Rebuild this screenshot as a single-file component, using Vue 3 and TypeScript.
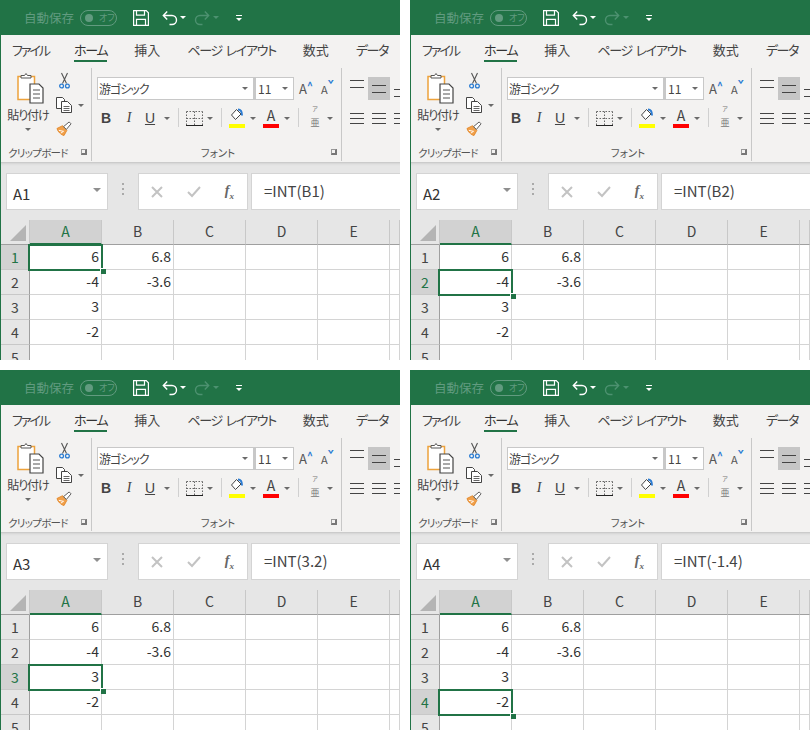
<script setup lang="ts">
interface Panel { name: string; formula: string; row: number }
const panels: Panel[] = [
  { name: 'A1', formula: '=INT(B1)', row: 1 },
  { name: 'A2', formula: '=INT(B2)', row: 2 },
  { name: 'A3', formula: '=INT(3.2)', row: 3 },
  { name: 'A4', formula: '=INT(-1.4)', row: 4 },
]
const cols = ['A', 'B', 'C', 'D', 'E', '']
const rows: string[][] = [
  ['6', '6.8'],
  ['-4', '-3.6'],
  ['3', ''],
  ['-2', ''],
  ['', ''],
]
const tabs = [
  { t: 'ファイル', c: 'tight' },
  { t: 'ホーム', c: 'kana on' },
  { t: '挿入', c: '' },
  { t: 'ページ レイアウト', c: 'kana' },
  { t: '数式', c: '' },
  { t: 'データ', c: 'kana' },
]
</script>

<template>
  <main class="sheet">
    <section v-for="p in panels" :key="p.name" class="panel">
      <header class="title">
        <span class="autosave">自動保存</span>
        <span class="toggle"><i class="knob"></i><b>オフ</b></span>
        <svg class="save" width="16" height="16" viewBox="0 0 16 16" fill="none" stroke="#fff" stroke-width="1.2">
          <path d="M.6.6h12.6l2.2 2.2v12.6H.6z" /><path d="M3.5.8v4.4h8V.8M3.5 15.2V9.4h9v5.8" />
        </svg>
        <svg class="undo" width="16" height="16" viewBox="0 0 16 16" fill="none" stroke="#fff" stroke-width="1.4">
          <path d="M1.5 5.5h8.5a4 4 0 0 1 0 9H7.5M5.2 1.5 1.3 5.5l3.9 4" />
        </svg>
        <i class="caret white"></i>
        <svg class="redo" width="16" height="16" viewBox="0 0 16 16" fill="none" stroke="#4d9170" stroke-width="1.4">
          <path d="M14.5 5.5H6a4 4 0 0 0 0 9h2.5M10.8 1.5l3.9 4-3.9 4" />
        </svg>
        <i class="caret dim"></i>
        <span class="custom"><i></i><i class="caret white"></i></span>
      </header>

      <nav class="tabs">
        <span v-for="t in tabs" :key="t.t" class="tab" :class="t.c">{{ t.t }}</span>
      </nav>

      <div class="ribbon">
        <div class="group clip">
          <div class="group-body clip-body">
            <div class="paste">
              <svg class="paste-icon" width="30" height="32" viewBox="0 0 30 32" fill="none">
                <path d="M2 4.5h16.5v23H2z" stroke="#eda23c" stroke-width="1.5" fill="#fff" />
                <path d="M5 6V3.5h3.5L10 1.5l1.5 2H15V6z" fill="#fff" stroke="#555" />
                <path d="M14 12h9l4 4v15H14z" fill="#fff" stroke="#444" stroke-width="1.2" />
                <path d="M17 18h7M17 22h7M17 26h7" stroke="#555" />
              </svg>
              <span class="paste-label">貼り付け</span>
              <i class="caret gray"></i>
            </div>
            <div class="clip-tools">
              <svg class="scissors" width="11" height="17" viewBox="0 0 11 17" fill="none">
                <path d="M2.5 1l5 10.5M8.5 1l-5 10.5" stroke="#555" stroke-width="1.1" />
                <circle cx="2.6" cy="14" r="1.9" stroke="#2b7cd3" stroke-width="1.3" /><circle cx="8.4" cy="14" r="1.9" stroke="#2b7cd3" stroke-width="1.3" />
              </svg>
              <span class="copy">
                <svg width="16" height="16" viewBox="0 0 16 16" fill="none" stroke="#444">
                  <path d="M.5.5h6l2 2v9h-8z" fill="#fff" /><path d="M5.5 4.5h6l4 4v7h-10z" fill="#fff" /><path d="M7.5 9.5h6M7.5 11.5h6M7.5 13.5h6" stroke="#666" />
                </svg>
                <i class="caret gray"></i>
              </span>
              <svg width="16" height="15" viewBox="0 0 17 16" fill="none">
                <path d="M1 8l6-3 4.5 5-3 5.5C6 15 2 12 1 8z" fill="#f0a04b" stroke="#e48a2c" />
                <path d="M8 6l6-5 2 2-5 6z" fill="#fff" stroke="#555" />
                <path d="M3 10l5 1M5 13l3-2" stroke="#fff" />
              </svg>
            </div>
          </div>
          <div class="label"><span class="clip-name">クリップボード</span><i class="launcher"></i></div>
        </div>

        <div class="group font">
          <div class="group-body font-body">
            <div class="font-row">
              <span class="select fname"><span class="fname-text">游ゴシック</span><i class="caret gray"></i></span>
              <span class="select fsize">11<i class="caret gray"></i></span>
              <span class="grow big">A<sup>^</sup></span>
              <span class="grow small">A<sup>ˇ</sup></span>
            </div>
            <div class="font-row second">
              <b class="fmt bold">B</b>
              <i class="fmt ital">I</i>
              <u class="fmt und">U</u>
              <i class="caret gray c1"></i>
              <i class="vsep s1"></i>
              <svg class="borders" width="17" height="15" viewBox="0 0 17 15" fill="none" stroke="#666" stroke-dasharray="1.5 1.5">
                <path d="M.5.5h16M.5 7.5h16M.5.5v14M8.5.5v14M16.5.5v14" /><path d="M0 14.5h17" stroke="#222" stroke-dasharray="none" />
              </svg>
              <i class="caret gray c2"></i>
              <i class="vsep s2"></i>
              <span class="color fill">
                <svg width="14" height="13" viewBox="0 0 14 13" fill="none">
                  <path d="M6.5 1.5 1.5 7l4 4.5L11 6z" stroke="#444" fill="#fff" /><path d="M8 1.5c3 0 4 2 4 6" stroke="#2b7cd3" stroke-width="2" />
                </svg>
                <em class="yellow"></em>
              </span>
              <i class="caret gray c3"></i>
              <span class="color fcolor"><span>A</span><em class="red"></em></span>
              <i class="caret gray c4"></i>
              <i class="vsep s3"></i>
              <span class="phon"><small>ア</small><span>亜</span></span>
              <i class="caret gray c5"></i>
            </div>
          </div>
          <div class="label center"><span>フォント</span><i class="launcher"></i></div>
        </div>

        <div class="group align">
          <div class="align-row">
            <span class="lines top"><i></i><i></i></span>
            <span class="lines mid active"><i></i><i></i></span>
            <span class="lines bot"><i></i><i></i></span>
          </div>
          <div class="align-row low">
            <span class="lines full l"><i></i><i></i><i></i></span>
            <span class="lines full c"><i></i><i></i><i></i></span>
            <span class="lines full r"><i></i><i></i><i></i></span>
          </div>
        </div>
      </div>

      <div class="fbar">
        <div class="namebox"><span>{{ p.name }}</span><i class="caret name-caret"></i></div>
        <div class="dots"><i></i><i></i><i></i></div>
        <div class="fbtns">
          <svg width="12" height="12" viewBox="0 0 12 12" stroke="#c3c3c3" stroke-width="2"><path d="M1 1l10 10M11 1 1 11" /></svg>
          <svg width="14" height="12" viewBox="0 0 14 12" fill="none" stroke="#c3c3c3" stroke-width="2"><path d="M1 6l4 4 8-9" /></svg>
          <span class="fx">f<sub>x</sub></span>
        </div>
        <div class="finput">{{ p.formula }}</div>
      </div>

      <div class="grid">
        <div class="corner"><i></i></div>
        <div v-for="(c, i) in cols" :key="'h' + i" class="chead" :class="{ on: c === 'A' }">{{ c }}</div>
        <template v-for="(r, ri) in rows" :key="ri">
          <div class="rhead" :class="{ on: ri + 1 === p.row }">{{ ri + 1 }}</div>
          <div v-for="(c, ci) in cols" :key="ci" class="cell">
            {{ r[ci] }}
            <span v-if="ci === 0 && ri + 1 === p.row" class="active-cell"><i></i></span>
          </div>
        </template>
      </div>
    </section>
  </main>
</template>

<style scoped>
.sheet {
  display: grid;
  grid-template-columns: 400px 400px;
  grid-template-rows: 360px 360px;
  gap: 10px;
  width: 810px;
  height: 730px;
  font-family: "Noto Sans CJK JP", sans-serif;
  font-feature-settings: "palt";
  color: #333;
}
.panel {
  box-sizing: border-box;
  height: 360px;
  overflow: hidden;
  border-left: 1px solid #217346;
  background: #f3f2f1;
  display: flex;
  flex-direction: column;
}
i { display: block; font-style: normal; }
.caret { width: 0; height: 0; border: 3px solid transparent; border-top: 3px solid #666; border-bottom: 0; flex: none; }
.caret.white { border-top-color: #fff; }
.caret.dim { border-top-color: #4d9170; }
.caret.gray { border-top-color: #6a6a6a; }

.title { height: 35px; flex: none; background: #217346; display: flex; align-items: center; }
.autosave { margin-left: 23px; width: 48px; margin-right: 1px; font-size: 12.5px; color: #629b80; white-space: nowrap; font-feature-settings: normal; }
.toggle { margin-left: 7px; box-sizing: border-box; width: 37px; height: 16px; border: 1px solid #629b80; border-radius: 8px; display: flex; align-items: center; color: #629b80; font-size: 9px; }
.knob { width: 8px; height: 8px; border-radius: 50%; background: #629b80; margin-left: 4px; }
.toggle b { font-weight: 400; margin-left: 6px; line-height: 14px; }
.save { margin-left: 16px; }
.undo { margin-left: 13px; }
.title .caret.white { margin-left: 2px; }
.redo { margin-left: 8px; }
.title .caret.dim { margin-left: 3px; }
.custom { margin-left: 17px; display: flex; flex-direction: column; align-items: center; gap: 2px; }
.custom i:first-child { width: 6px; height: 1px; background: #fff; }
.custom .caret.white { margin-left: 0; }

.tabs { height: 30px; flex: none; display: flex; font-size: 13px; position: relative; color: #444; }
.tab { line-height: 30px; white-space: nowrap; margin-left: 27px; height: 27px; }
.tab:first-child { margin-left: 11px; }
.tab.kana { letter-spacing: -1.3px; word-spacing: 2px; }
.tab.tight { letter-spacing: -2px; }
.tab.on { margin-left: 25px; border-bottom: 2px solid #217346; color: #333; height: 25px; line-height: 30px; }

.ribbon { height: 97px; flex: none; display: flex; overflow: hidden; }
.group { display: flex; flex-direction: column; height: 93px; margin-top: 3px; flex: none; border-right: 1px solid #c8c8c8; box-sizing: border-box; }
.group-body { flex: 1; display: flex; min-height: 0; }
.clip { width: 91px; }
.font { width: 250px; }
.label { height: 16px; margin-bottom: 1px; display: flex; align-items: center; justify-content: space-between; font-size: 10.5px; color: #555; padding: 0 4px 0 7px; white-space: nowrap; position: relative; flex: none; }
.clip-name { letter-spacing: -0.7px; }
.label.center { justify-content: center; }
.label.center .launcher { position: absolute; right: 4px; }
.launcher { width: 6px; height: 6px; border-left: 1px solid #999; border-top: 1px solid #999; border-right: 2px solid #777; border-bottom: 2px solid #777; box-sizing: border-box; }

.clip-body { position: relative; }
.paste { width: 54px; display: flex; flex-direction: column; align-items: center; padding-top: 4px; }
.paste-icon { margin-left: 5px; }
.paste-label { font-size: 12px; letter-spacing: -1px; line-height: 22px; white-space: nowrap; color: #444; }
.paste .caret { margin-top: 2px; }
.clip-tools { display: flex; flex-direction: column; align-items: flex-start; gap: 8px; padding-top: 4px; margin-left: 1px; }
.scissors { margin-left: 3px; }
.copy { display: flex; align-items: center; gap: 6px; }

.font-body { flex-direction: column; padding: 9px 0 0 5px; }
.font-row { display: flex; align-items: center; height: 23px; }
.select { box-sizing: border-box; height: 23px; background: #fff; border: 1px solid #c8c8c8; display: flex; align-items: center; justify-content: space-between; font-size: 12px; padding: 0 5px 0 1px; color: #444; }
.fname-text { letter-spacing: -1px; }
.fname { width: 157px; }
.fsize { width: 40px; border-left-width: 2px; padding-left: 2px; }
.grow { font-size: 13px; color: #555; display: flex; line-height: 20px; }
.grow sup { color: #2b7cd3; font-size: 10px; line-height: 12px; font-weight: 700; }
.big { margin-left: 5px; width: 22px; }
.small { font-size: 11px; }

.second { margin-top: 8px; height: 20px; position: relative; }
.fmt { position: absolute; font-size: 14px; line-height: 20px; color: #444; font-family: "Liberation Sans", sans-serif; text-align: center; width: 14px; }
.bold { left: 2px; }
.ital { left: 25px; font-family: "Liberation Serif", serif; font-style: italic; }
.und { left: 46px; }
.second > .caret, .second > .vsep, .second > svg, .second > .color, .second > .phon { position: absolute; }
.c1 { left: 67px; top: 9px; }
.vsep { width: 1px; height: 19px; background: #d0d0d0; top: 0; }
.s1 { left: 81px; }
.borders { left: 89px; top: 3px; }
.c2 { left: 110px; top: 9px; }
.s2 { left: 124px; }
.color { width: 16px; height: 20px; display: flex; flex-direction: column; align-items: center; font-size: 14px; line-height: 15px; color: #444; top: 0; }
.color em { display: block; width: 16px; height: 4px; flex: none; margin-top: auto; }
.yellow { background: #ffff00; }
.red { background: #ff0000; }
.fill { left: 132px; }
.c3 { left: 153px; top: 9px; }
.fcolor { left: 166px; }
.c4 { left: 187px; top: 9px; }
.s3 { left: 201px; }
.phon { left: 212px; top: -4px; width: 12px; display: flex; flex-direction: column; align-items: center; gap: 3px; font-size: 9px; line-height: 13px; color: #777; }
.phon small { font-size: 6px; line-height: 9px; }
.c5 { left: 230px; top: 9px; }

.align { border: 0; width: 58px; padding: 9px 0 0 8px; }
.align-row { display: flex; height: 23px; }
.low { margin-top: 8px; height: 20px; }
.lines { box-sizing: border-box; width: 22px; padding: 0 4px; display: flex; flex-direction: column; gap: 6px; justify-content: center; }
.lines i { height: 1px; background: #444; width: 14px; }
.active { background: #c6c6c6; }
.top { justify-content: flex-start; padding-top: 3px; width: 18px; padding-left: 0; }
.bot { justify-content: flex-end; padding-bottom: 3px; }
.full { gap: 4px; }
.full.l { padding-left: 0; }

.fbar { height: 58px; flex: none; background: #e6e6e6; display: flex; align-items: flex-start; padding-top: 11px; box-sizing: border-box; box-shadow: inset 0 4px 3px -3px #bdbdbd; }
.namebox { box-sizing: border-box; margin-left: 5px; width: 102px; height: 37px; background: #fff; border: 1px solid #d4d4d4; display: flex; align-items: center; justify-content: space-between; padding: 4px 6px 0 6px; font-size: 15px; }
.name-caret { border-width: 4px; border-top-color: #8f8f8f; border-bottom: 0; margin-top: -8px; }
.dots { width: 30px; display: flex; flex-direction: column; align-items: center; gap: 3px; padding-top: 10px; }
.dots i { width: 2px; height: 2px; background: #aaa; }
.fbtns { box-sizing: border-box; width: 110px; height: 37px; background: #fff; border: 1px solid #d4d4d4; display: flex; align-items: center; justify-content: space-between; padding: 0 13px 0 12px; }
.fx { font-family: "Liberation Serif", serif; font-style: italic; font-size: 14px; color: #666; font-weight: 700; }
.fx sub { font-size: 9px; }
.finput { box-sizing: border-box; margin-left: 3px; flex: 1; height: 37px; background: #fff; border: 1px solid #d4d4d4; border-right: 0; font-size: 15px; line-height: 34px; padding-left: 12px; white-space: nowrap; color: #444; }

.grid { display: grid; grid-template-columns: 29px repeat(5, 72px) 1fr; grid-template-rows: 25px repeat(5, 25px); background: #fff; font-size: 14px; flex: none; }
.corner { background: #e6e6e6; border-right: 1px solid #c8c8c8; border-bottom: 1px solid #9f9f9f; position: relative; }
.corner i { position: absolute; right: 3px; bottom: 3px; width: 0; height: 0; border-left: 16px solid transparent; border-bottom: 16px solid #b4b4b4; }
.chead { background: #e6e6e6; border-right: 1px solid #c8c8c8; border-bottom: 1px solid #9f9f9f; text-align: center; line-height: 23px; color: #444; }
.chead.on { background: #d2d2d2; color: #217346; border-bottom: 2px solid #217346; }
.rhead { background: #e6e6e6; border-right: 1px solid #9f9f9f; border-bottom: 1px solid #c8c8c8; text-align: center; line-height: 24px; color: #444; }
.rhead.on { background: #d2d2d2; color: #217346; }
.cell { position: relative; border-right: 1px solid #d4d4d4; border-bottom: 1px solid #d4d4d4; text-align: right; line-height: 23px; padding-right: 2px; box-sizing: border-box; color: #333; }
.active-cell { position: absolute; z-index: 2; left: -2px; top: -1px; right: -2px; bottom: -2px; border: 2px solid #217346; }
.active-cell i { position: absolute; right: -5px; bottom: -5px; width: 5px; height: 5px; background: #217346; border: 1px solid #fff; border-right: 0; border-bottom: 0; }
</style>
